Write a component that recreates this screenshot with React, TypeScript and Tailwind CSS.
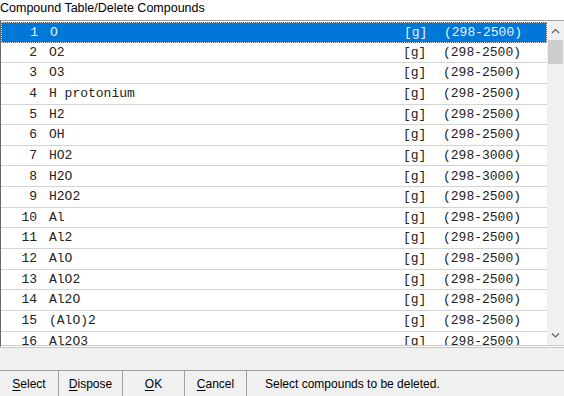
import React from 'react'

type Row = { n: number; name: string; phase: string; range: string }

const ROWS: Row[] = [
  { n: 1, name: 'O', phase: '[g]', range: '(298-2500)' },
  { n: 2, name: 'O2', phase: '[g]', range: '(298-2500)' },
  { n: 3, name: 'O3', phase: '[g]', range: '(298-2500)' },
  { n: 4, name: 'H protonium', phase: '[g]', range: '(298-2500)' },
  { n: 5, name: 'H2', phase: '[g]', range: '(298-2500)' },
  { n: 6, name: 'OH', phase: '[g]', range: '(298-2500)' },
  { n: 7, name: 'HO2', phase: '[g]', range: '(298-3000)' },
  { n: 8, name: 'H2O', phase: '[g]', range: '(298-3000)' },
  { n: 9, name: 'H2O2', phase: '[g]', range: '(298-2500)' },
  { n: 10, name: 'Al', phase: '[g]', range: '(298-2500)' },
  { n: 11, name: 'Al2', phase: '[g]', range: '(298-2500)' },
  { n: 12, name: 'AlO', phase: '[g]', range: '(298-2500)' },
  { n: 13, name: 'AlO2', phase: '[g]', range: '(298-2500)' },
  { n: 14, name: 'Al2O', phase: '[g]', range: '(298-2500)' },
  { n: 15, name: '(AlO)2', phase: '[g]', range: '(298-2500)' },
  { n: 16, name: 'Al2O3', phase: '[g]', range: '(298-2500)' },
]

const BUTTONS = [
  { key: 'S', rest: 'elect', w: 'w-[59px]' },
  { key: 'D', rest: 'ispose', w: 'w-[64px]' },
  { key: 'O', rest: 'K', w: 'w-[62px]' },
  { key: 'C', rest: 'ancel', w: 'w-[62px]' },
]

export default function App() {
  return (
    <div className="w-[564px] h-[396px] bg-white flex flex-col overflow-hidden font-['Liberation_Sans',sans-serif] text-black">
      {/* Title */}
      <div className="h-[20px] shrink-0 text-[12.5px] leading-[14px] pt-[1px]">
        Compound Table/Delete Compounds
      </div>

      {/* List + scrollbar */}
      <div className="h-[328px] shrink-0 flex border-t border-t-[#a0a0a0] border-l border-l-[#696969] border-b-[3px] border-b-[#c8c8c8] border-double">
        <div className="flex-1 overflow-hidden pt-[1px]">
          {ROWS.map((r, i) => (
            <div
              key={r.n}
              className={[
                "h-[20.65px] flex items-center font-['Liberation_Mono',monospace] text-[13px] border-b border-[#d4d4d4]",
                i === 0 ? 'bg-[#0078d7] text-[#e8f2ff] border-dotted border border-[#99c7ee]' : 'text-[#222]',
              ].join(' ')}
            >
              <span className="w-[36px] text-right">{r.n}</span>
              <span className="ml-[12px] w-[354px] whitespace-pre">{r.name}</span>
              <span className="w-[40px]">{r.phase}</span>
              <span>{r.range}</span>
            </div>
          ))}
        </div>
        {/* Scrollbar */}
        <div className="w-[17px] bg-[#f0f0f0] flex flex-col items-center">
          <svg width="9" height="17" viewBox="0 0 9 17" className="mt-[2px]">
            <path d="M1 10 L4.5 6.5 L8 10" fill="none" stroke="#606060" strokeWidth="1.2" />
          </svg>
          <div className="w-[15px] h-[24px] bg-[#cdcdcd]" />
          <div className="flex-1" />
          <svg width="9" height="17" viewBox="0 0 9 17" className="mb-[1px]">
            <path d="M1 6.5 L4.5 10 L8 6.5" fill="none" stroke="#606060" strokeWidth="1.2" />
          </svg>
        </div>
      </div>

      {/* Empty panel */}
      <div className="h-[23px] shrink-0 bg-[#f0f0f0] border-b border-[#a0a0a0]" />

      {/* Buttons row */}
      <div className="flex-1 bg-[#f0f0f0] flex items-center text-[12px]">
        {BUTTONS.map(b => (
          <div
            key={b.key + b.rest}
            className={`${b.w} h-full flex items-center justify-center border-r border-[#a0a0a0]`}
          >
            <span>
              <span className="underline underline-offset-2">{b.key}</span>
              {b.rest}
            </span>
          </div>
        ))}
        <div className="pl-[18px] text-[12px]">Select compounds to be deleted.</div>
      </div>
    </div>
  )
}
